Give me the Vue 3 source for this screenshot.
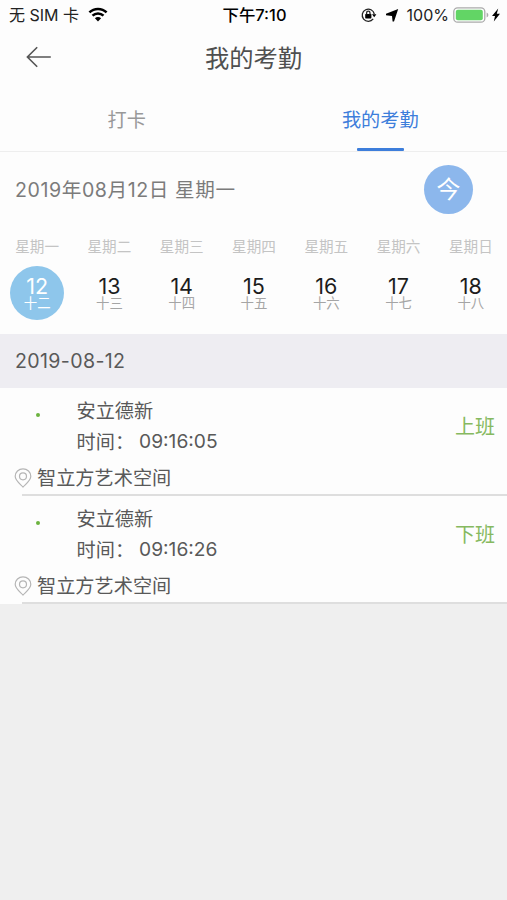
<template>
  <div class="page">
    <div class="status-bar">
      <div class="status-left">
        <span>无 SIM 卡</span>
        <svg class="wifi" viewBox="0 0 20 15">
          <path d="M1.4 5.4a12.3 12.3 0 0 1 17.2 0" />
          <path d="M4.5 8.7a7.8 7.8 0 0 1 11 0" />
          <path class="fill" d="M10 14.4l-3.1-3.1a4.4 4.4 0 0 1 6.2 0z" />
        </svg>
      </div>
      <div class="status-time">下午7:10</div>
      <div class="status-right">
        <svg class="lock" viewBox="0 0 16 16">
          <path d="M12.2 11.9A6.1 6.1 0 1 1 13.3 7" />
          <path class="fill" d="M11 7.2h4.4l-2.2 3z" />
          <rect class="fill" x="4.2" y="7" width="6.2" height="4.4" rx="0.6" />
          <path class="shackle" d="M5.6 7.4V5.9a1.7 1.7 0 0 1 3.4 0v1.5" />
        </svg>
        <svg class="arrow" viewBox="0 0 14 14">
          <path d="M13.2 1L9 13.4H7.6L7 8L1 7.2V5.8z" />
        </svg>
        <span class="percent">100%</span>
        <svg class="battery" viewBox="0 0 36 16">
          <rect class="shell" x="0.8" y="0.8" width="31" height="14.4" rx="3.8" />
          <rect class="level" x="2.8" y="2.8" width="27" height="10.4" rx="2" />
          <path class="tip" d="M33.6 5.6q1.8 0.8 1.8 2.4t-1.8 2.4z" />
        </svg>
        <svg class="bolt" viewBox="0 0 8 14">
          <path d="M6.2 0.4L0 8h3L1.8 13.6L8 5.8H4.8z" />
        </svg>
      </div>
    </div>

    <div class="header">
      <button class="back">
        <svg viewBox="0 0 26 22">
          <path d="M11.2 1.2L1.4 11l9.8 9.8M1.4 11h23.4" />
        </svg>
      </button>
      <h1 class="title">我的考勤</h1>
    </div>

    <div class="tabs">
      <div
        v-for="tab in tabs"
        :key="tab"
        class="tab"
        :class="{ active: tab === activeTab }"
        @click="activeTab = tab"
      >
        <span>{{ tab }}</span>
      </div>
    </div>

    <div class="calendar">
      <div class="today">
        <span class="today-date">2019年08月12日 星期一</span>
        <button class="today-button" @click="selected = 12">今</button>
      </div>
      <div class="week">
        <div v-for="day in days" :key="day.date" class="day" @click="selected = day.date">
          <span class="week-name">{{ day.week }}</span>
          <div class="day-circle" :class="{ selected: day.date === selected }">
            <span class="solar">{{ day.date }}</span>
            <span class="lunar">{{ day.lunar }}</span>
          </div>
        </div>
      </div>
    </div>

    <div class="section-date">2019-08-12</div>

    <div class="records">
      <div v-for="record in records" :key="record.time" class="record">
        <div class="record-main">
          <span class="dot"></span>
          <div class="record-info">
            <div class="name">{{ record.name }}</div>
            <div class="time"><span>时间<i>：</i></span><span class="clock">{{ record.time }}</span></div>
          </div>
          <div class="type">{{ record.type }}</div>
        </div>
        <div class="place">
          <svg viewBox="0 0 18 20">
            <path d="M9 19C6.2 16.1 1.2 12.6 1.2 8.3a7.8 7.5 0 0 1 15.6 0C16.8 12.6 11.8 16.1 9 19z" />
            <circle cx="9" cy="8.3" r="3.5" />
          </svg>
          <span>{{ record.place }}</span>
        </div>
      </div>
    </div>
  </div>
</template>

<script setup>
import { ref } from 'vue'

const tabs = ['打卡', '我的考勤']
const activeTab = ref('我的考勤')
const selected = ref(12)

const days = [
  { week: '星期一', date: 12, lunar: '十二' },
  { week: '星期二', date: 13, lunar: '十三' },
  { week: '星期三', date: 14, lunar: '十四' },
  { week: '星期四', date: 15, lunar: '十五' },
  { week: '星期五', date: 16, lunar: '十六' },
  { week: '星期六', date: 17, lunar: '十七' },
  { week: '星期日', date: 18, lunar: '十八' }
]

const records = [
  { name: '安立德新', time: '09:16:05', type: '上班', place: '智立方艺术空间' },
  { name: '安立德新', time: '09:16:26', type: '下班', place: '智立方艺术空间' }
]
</script>

<style>
body {
  margin: 0;
  background: #efefef;
}
</style>

<style scoped>
.page {
  min-height: 900px;
  background: #efefef;
  color: #595959;
  font-family: Inter, "Noto Sans CJK SC", sans-serif;
  font-size: 19px;
}

button {
  border: none;
  padding: 0;
  background: transparent;
  font-family: inherit;
  cursor: pointer;
}

svg {
  display: block;
  fill: none;
}

/* status bar */
.status-bar {
  display: grid;
  grid-template-columns: 1fr auto 1fr;
  align-items: center;
  height: 30px;
  padding: 0 7px 0 9px;
  background: #fdfdfd;
  color: #222;
  font-size: 16px;
  line-height: 30px;
}
.status-left {
  display: flex;
  align-items: center;
  gap: 9px;
}
.wifi {
  width: 20px;
  height: 15px;
  margin-top: -2px;
  stroke: #000;
  stroke-width: 2.5;
}
.wifi .fill,
.lock .fill {
  fill: #000;
  stroke: none;
}
.status-time {
  color: #000;
  font-size: 16.4px;
  font-weight: 500;
}
.status-right {
  display: flex;
  align-items: center;
  justify-content: flex-end;
}
.lock {
  width: 16px;
  height: 16px;
  stroke: #222;
  stroke-width: 1.3;
}
.arrow {
  width: 14px;
  height: 14px;
  margin-left: 8px;
  fill: #000;
}
.percent {
  margin-left: 8px;
}
.battery {
  width: 36px;
  height: 16px;
  margin-left: 4px;
}
.battery .shell {
  stroke: #aaa;
  stroke-width: 1.3;
}
.battery .level {
  fill: #62d565;
}
.battery .tip {
  fill: #aaa;
}
.bolt {
  width: 8px;
  height: 14px;
  margin-left: 3px;
  fill: #000;
}

/* header */
.header {
  display: grid;
  grid-template-columns: 64px 1fr 64px;
  align-items: center;
  height: 56px;
  background: #fdfdfd;
}
.back svg {
  width: 26px;
  height: 22px;
  margin: -2px 0 0 26px;
  stroke: #555;
  stroke-width: 1.6;
}
.title {
  margin: 0;
  color: #4f4f4f;
  font-size: 24.3px;
  font-weight: 400;
  line-height: 54px;
  text-align: center;
}

/* tabs */
.tabs {
  display: flex;
  height: 65px;
  border-bottom: 1px solid #eee;
  background: #fdfdfd;
}
.tab {
  flex: 1;
  display: flex;
  flex-direction: column;
  align-items: center;
  justify-content: space-between;
  color: #999;
  font-size: 19.2px;
  line-height: 68px;
  cursor: pointer;
}
.tab span {
  height: 62px;
}
.tab.active {
  color: #3d7edb;
}
.tab.active::after {
  content: "";
  width: 47px;
  height: 3px;
  border-radius: 1px;
  background: #3d7edb;
}

/* calendar */
.calendar {
  height: 182px;
  background: #fdfdfd;
}
.today {
  display: flex;
  align-items: center;
  justify-content: space-between;
  height: 74px;
  padding: 0 34px 0 15px;
}
.today-date {
  margin-top: -2px;
  color: #7b7b7b;
  font-size: 19.6px;
  letter-spacing: 0.58px;
}
.today-button {
  width: 49px;
  height: 49px;
  border-radius: 50%;
  background: #8cb7ec;
  color: #fff;
  font-size: 24px;
  line-height: 49px;
}
.week {
  display: grid;
  grid-template-columns: repeat(7, 1fr);
  padding-left: 1px;
}
.day {
  display: flex;
  flex-direction: column;
  align-items: center;
  cursor: pointer;
}
.week-name {
  height: 40px;
  color: #c4c4c4;
  font-size: 14.6px;
  line-height: 42px;
}
.day-circle {
  display: flex;
  flex-direction: column;
  align-items: center;
  width: 54px;
  height: 54px;
  border-radius: 50%;
}
.solar {
  height: 21px;
  padding-top: 9px;
  color: #1c1c1c;
  font-size: 21.5px;
  line-height: 22px;
}
.lunar {
  color: #a5a5a5;
  font-size: 13.4px;
  line-height: 14px;
}
.day-circle.selected {
  background: #8ec6eb;
}
.selected .solar,
.selected .lunar {
  color: #fff;
}

/* records */
.section-date {
  height: 54px;
  padding-left: 15px;
  background: #eeedf2;
  font-size: 19.6px;
  letter-spacing: 0.35px;
  line-height: 55px;
}
.records {
  background: #fdfdfd;
}
.record {
  display: flex;
  flex-direction: column;
  height: 108px;
  background: linear-gradient(#dedede, #dedede) 22px 100% / 100% 2px no-repeat;
}
.record-main {
  display: flex;
  height: 72px;
  padding: 0 12px 0 36px;
}
.dot {
  width: 4px;
  height: 4px;
  margin-top: 25px;
  border-radius: 50%;
  background: #6cb33f;
}
.record-info {
  flex: 1;
  margin-left: 36.5px;
  padding-top: 8px;
  font-size: 19.2px;
  line-height: 31px;
}
.time {
  display: flex;
  gap: 5px;
}
.time i {
  font-style: normal;
}
.clock {
  margin-top: -1px;
}
.type {
  color: #86b960;
  font-size: 20px;
  line-height: 78px;
}
.place {
  display: flex;
  align-items: center;
  height: 36px;
  padding-left: 14px;
  gap: 5px;
  font-size: 19.2px;
  line-height: 36px;
}
.place svg {
  width: 18px;
  height: 20px;
  margin-top: -1px;
  stroke: #b5b5b5;
  stroke-width: 1.2;
}
</style>
